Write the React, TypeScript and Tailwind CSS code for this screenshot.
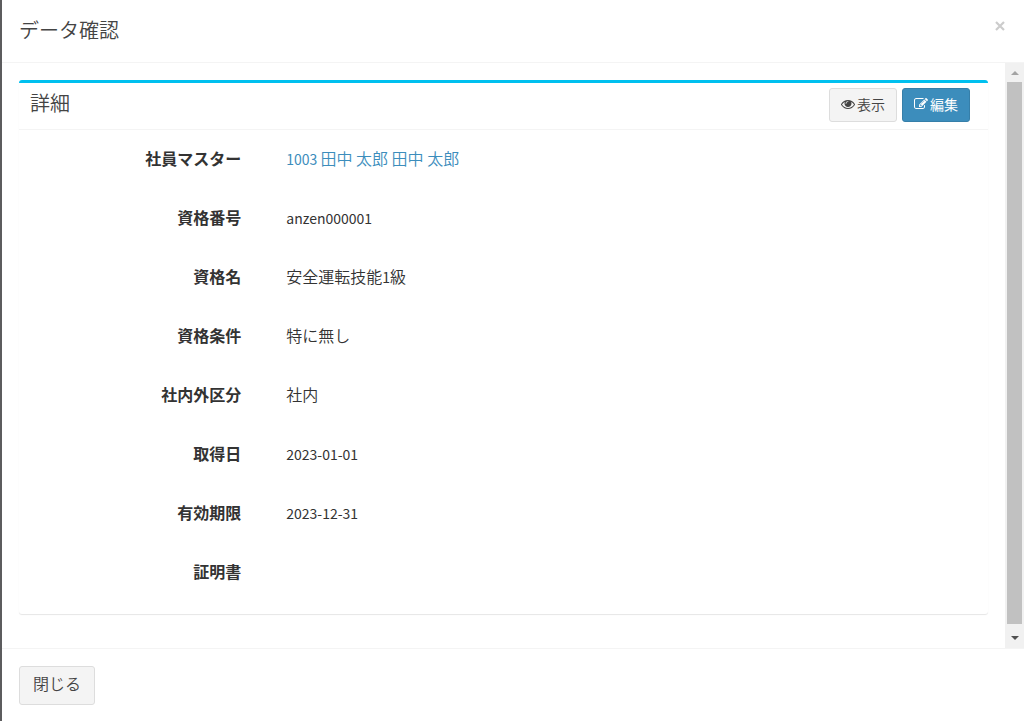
import React from "react";

interface Field {
  label: string;
  value: React.ReactNode;
}

// Latin text is set one step smaller than the Japanese around it
function Latin({ children }: { children: React.ReactNode }) {
  return <span className="text-sm font-normal">{children}</span>;
}

const fields: Field[] = [
  {
    label: "社員マスター",
    value: (
      <a href="#" className="text-[#3c8dbc]">
        <Latin>1003 </Latin>田中 太郎 田中 太郎
      </a>
    ),
  },
  { label: "資格番号", value: <Latin>anzen000001</Latin> },
  {
    label: "資格名",
    value: (
      <>
        安全運転技能<Latin>1</Latin>級
      </>
    ),
  },
  { label: "資格条件", value: "特に無し" },
  { label: "社内外区分", value: "社内" },
  { label: "取得日", value: <Latin>2023-01-01</Latin> },
  { label: "有効期限", value: <Latin>2023-12-31</Latin> },
  { label: "証明書", value: "" },
];

function EyeIcon() {
  return (
    <svg viewBox="0 0 1792 1792" className="size-[14px]" fill="currentColor" aria-hidden="true">
      <path d="M1664 960q-152-236-381-353 61 104 61 225 0 185-131.5 316.5t-316.5 131.5-316.5-131.5-131.5-316.5q0-121 61-225-229 117-381 353 133 205 333.5 326.5t434.5 121.5 434.5-121.5 333.5-326.5zm-720-384q0-20-14-34t-34-14q-125 0-214.5 89.5t-89.5 214.5q0 20 14 34t34 14 34-14 14-34q0-86 61-147t147-61q20 0 34-14t14-34zm848 384q0 34-20 69-140 230-376.5 368.5t-499.5 138.5-499.5-139-376.5-368q-20-35-20-69t20-69q140-229 376.5-368t499.5-139 499.5 139 376.5 368q20 35 20 69z" />
    </svg>
  );
}

function EditIcon() {
  return (
    <svg viewBox="0 0 1792 1792" className="size-[14px]" fill="currentColor" aria-hidden="true">
      <path d="M888 1184l116-116-152-152-116 116v56h96v96h56zm440-720q-16-16-33 1l-350 350q-17 17-1 33t33-1l350-350q17-17 1-33zm80 594v190q0 119-84.5 203.5t-203.5 84.5h-832q-119 0-203.5-84.5t-84.5-203.5v-832q0-119 84.5-203.5t203.5-84.5h832q63 0 117 25 15 7 18 23 3 17-9 29l-49 49q-14 14-32 8-23-6-45-6h-832q-66 0-113 47t-47 113v832q0 66 47 113t113 47h832q66 0 113-47t47-113v-126q0-13 9-22l64-64q15-15 35-7t20 29zm-96-738l288 288-672 672h-288v-288zm444 132l-92 92-288-288 92-92q28-28 68-28t68 28l152 152q28 28 28 68t-28 68z" />
    </svg>
  );
}

function ScrollBar() {
  return (
    <div className="flex w-[19px] shrink-0 flex-col items-center bg-[#f1f1f1]" aria-hidden="true">
      <div className="flex h-[19px] items-center">
        <svg viewBox="0 0 8 4" className="h-1 w-2">
          <path d="M0 4L4 0L8 4Z" fill="#a3a3a3" />
        </svg>
      </div>
      <div className="w-[15px] flex-1 bg-[#c1c1c1]" />
      <div className="flex h-6 items-center pt-1">
        <svg viewBox="0 0 8 4" className="h-1 w-2">
          <path d="M0 0L4 4L8 0Z" fill="#505050" />
        </svg>
      </div>
    </div>
  );
}

export default function App() {
  return (
    <div className="flex min-h-screen flex-col border-l-2 border-[#5c5c5e] bg-white font-['Noto_Sans_CJK_JP',sans-serif] text-[#333]">
      {/* HEADER */}
      <header className="flex items-start justify-between border-b border-[#f4f4f4] pt-4 pr-[14px] pb-[18px] pl-[17px]">
        <h4 className="text-xl leading-7 font-[350] text-[#444]">データ確認</h4>
        <button
          type="button"
          aria-label="Close"
          className="flex size-5 items-center justify-center text-[#ccc]"
        >
          <svg viewBox="0 0 10 10" className="size-[10px]" aria-hidden="true">
            <path d="M1 1L9 9M9 1L1 9" stroke="currentColor" strokeWidth="2.2" />
          </svg>
        </button>
      </header>

      {/* BODY */}
      <main className="flex flex-1">
        <div className="flex-1 px-[17px] pt-[17px]">
          <section className="rounded-[3px] border-t-[3px] border-[#00c0ef] pb-3 shadow-[0_1px_1px_rgba(0,0,0,0.1)]">
            <div className="flex items-start justify-between border-b border-[#f4f4f4] pt-[5px] pr-[18px] pb-[7px] pl-[11px]">
              <h3 className="text-xl leading-[30px] font-[350] text-[#444]">詳細</h3>
              <div className="flex gap-[5px]">
                <button
                  type="button"
                  className="flex h-[34px] items-center gap-[2px] rounded-[3px] border border-[#ddd] bg-[#f4f4f4] px-[11px] pb-[3px] text-sm font-[350] text-[#444]"
                >
                  <EyeIcon />
                  表示
                </button>
                <button
                  type="button"
                  className="flex h-[34px] items-center gap-[2px] rounded-[3px] border border-[#367fa9] bg-[#3c8dbc] px-[11px] pb-[3px] text-sm text-white"
                >
                  <EditIcon />
                  編集
                </button>
              </div>
            </div>

            <dl>
              {fields.map((f) => (
                <div key={f.label} className="flex h-[59px] items-center pb-[3px] leading-6">
                  <dt className="w-1/4 pr-5 text-right font-bold">{f.label}</dt>
                  <dd className="flex-1 pl-[25px] font-[350]">{f.value}</dd>
                </div>
              ))}
            </dl>
          </section>
        </div>
        <ScrollBar />
      </main>

      {/* FOOTER */}
      <footer className="border-t border-[#f4f4f4] px-[17px] pt-[17px] pb-4">
        <button
          type="button"
          className="h-[39px] rounded-[3px] border border-[#ddd] bg-[#f4f4f4] px-[13px] pb-[5px] font-[350] text-[#444]"
        >
          閉じる
        </button>
      </footer>
    </div>
  );
}
